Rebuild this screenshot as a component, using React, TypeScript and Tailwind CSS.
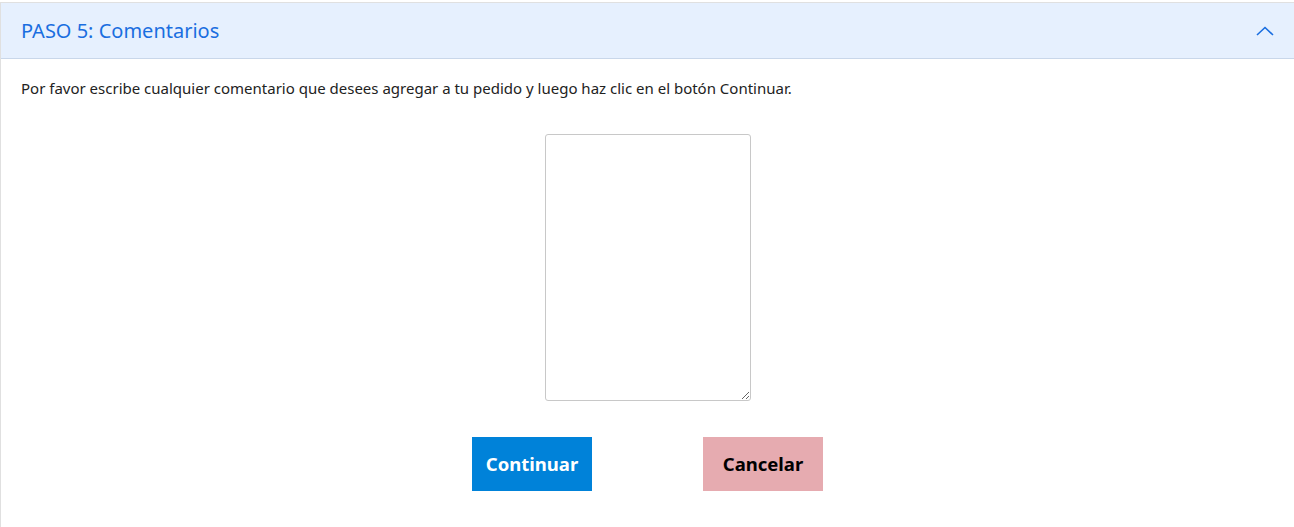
export default function App() {
  return (
    <div className="min-h-[527px] bg-white pt-[2px]" style={{ fontFamily: '"Noto Sans", "Open Sans", sans-serif' }}>
      <div className="border-t border-l border-[#e0e0e0] min-h-[525px]">
        {/* Header */}
        <div className="h-[56px] bg-[#e6f0fe] border-b border-[#c9d7ea] flex items-center justify-between pl-[20px] pr-[20px]">
          <h2 className="text-[20px] text-[#1a6ee0] leading-none">PASO 5: Comentarios</h2>
          <svg width="18" height="10" viewBox="0 0 18 10" fill="none" className="text-[#1a6ee0]">
            <path d="M1 9 L9 1.5 L17 9" stroke="currentColor" strokeWidth="1.6" />
          </svg>
        </div>

        <div className="px-[20px] pt-[19px]">
          <p className="text-[15px] text-[#222] leading-[20px]">
            Por favor escribe cualquier comentario que desees agregar a tu pedido y luego haz clic en el botón Continuar.
          </p>

          <div className="flex justify-center mt-[36px]">
            <textarea className="w-[206px] h-[267px] border border-[#c8c8c8] rounded-[3px] bg-white resize" />
          </div>

          <div className="flex justify-center gap-[111px] mt-[36px]">
            <button className="w-[120px] h-[54px] bg-[#0082d9] text-white font-bold text-[18.5px]">
              Continuar
            </button>
            <button className="w-[120px] h-[54px] bg-[#e6abb0] text-black font-bold text-[18.5px]">
              Cancelar
            </button>
          </div>
        </div>
      </div>
    </div>
  );
}
